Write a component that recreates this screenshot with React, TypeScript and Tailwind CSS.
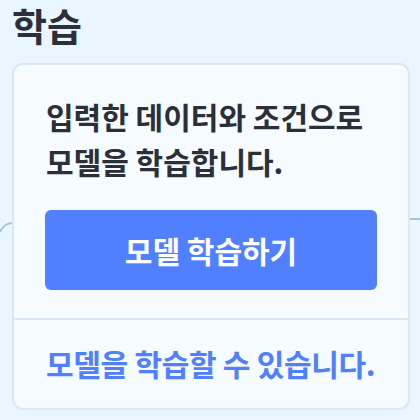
export default function App() {
  return (
    <div
      className="relative w-[420px] h-[420px] overflow-hidden bg-[#eaf6ff]"
      style={{ fontFamily: '"Noto Sans CJK KR", "Noto Sans", sans-serif' }}
    >
      {/* connector lines behind the card */}
      <svg className="absolute left-0 top-[200px]" width="14" height="40" viewBox="0 0 14 40">
        <path d="M0 32 Q4 23 13 23" fill="none" stroke="#a9c4d9" strokeWidth="2" />
      </svg>
      <div className="absolute right-0 top-[218px] w-[12px] h-[2px] bg-[#a9c4d9]" />

      <div className="relative px-[12px] pt-[3px]">
        <h2 className="text-[38px] font-bold text-[#2b2f3a] leading-[44px]">학습</h2>
        <div className="mt-[16px] w-[398px] rounded-[11px] border-2 border-[#d8e8f4] bg-[#f6fbff]">
          <div className="px-[31px] pt-[29px] pb-[28px]">
            <p className="pl-[1px] text-[30px] font-bold leading-[45px] text-[#2b2f3a]">
              입력한 데이터와 조건으로
              <br />
              모델을 학습합니다.
            </p>
            <button className="mt-[26px] w-full h-[80px] rounded-[6px] bg-[#5080ff] text-white text-[30px] font-bold">
              모델 학습하기
            </button>
          </div>
          <div className="border-t-2 border-[#d8e8f4] pl-[32px] pr-[20px] pt-[21px] pb-[22px]">
            <p className="whitespace-nowrap text-[30px] font-bold leading-[45px] tracking-[-0.3px] text-[#5080ff]">
              모델을 학습할 수 있습니다.
            </p>
          </div>
        </div>
      </div>
    </div>
  );
}
